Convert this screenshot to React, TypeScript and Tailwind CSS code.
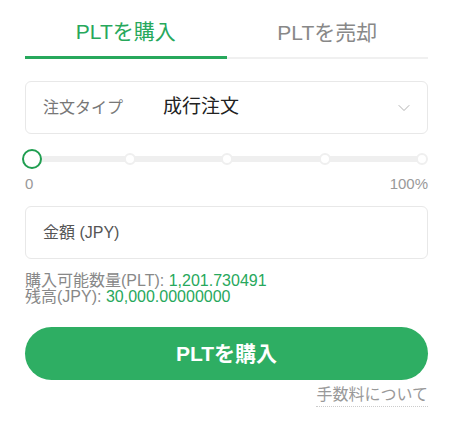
import { ChevronDown } from "lucide-react";

// ─── Tabs ────────────────────────────────────────────────────────────────────

const TABS = [
  { id: "buy", label: "PLTを購入", active: true },
  { id: "sell", label: "PLTを売却", active: false },
];

const STEPS = [0, 25, 50, 75, 100];

function Tabs() {
  return (
    <div className="grid grid-cols-2 items-end">
      {TABS.map((tab) => (
        <div key={tab.id} className="flex flex-col">
          <div
            className={`pt-[18px] pb-[10px] text-center text-[21px] leading-[28px] ${
              tab.active ? "text-[#27a85c]" : "text-[#888]"
            }`}
          >
            {tab.label}
          </div>
          {tab.active ? (
            <div className="h-[3px] bg-[#27a85c]" />
          ) : (
            <div className="h-[2px] bg-[#f0f0f0]" />
          )}
        </div>
      ))}
    </div>
  );
}

// ─── Percent slider ──────────────────────────────────────────────────────────

function PercentSlider() {
  return (
    <div className="mt-[14px]">
      <div className="relative h-[22px] ml-[7px] mr-[6px]">
        <div className="absolute left-0 right-0 top-[8px] h-[6px] bg-[#efefef] rounded-full" />
        {STEPS.slice(1).map((s) => (
          <span
            key={s}
            className="absolute top-[5px] w-[12px] h-[12px] -ml-[6px] rounded-full bg-white border-2 border-[#efefef]"
            style={{ left: `${s}%` }}
          />
        ))}
        <span className="absolute top-[1px] -left-[10px] w-[20px] h-[20px] rounded-full bg-white border-[2.5px] border-[#1f9e50]" />
      </div>
      <div className="flex justify-between mt-[5px] text-[15px] leading-[18px] text-[#999]">
        <span>0</span>
        <span>100%</span>
      </div>
    </div>
  );
}

// ─── Form ────────────────────────────────────────────────────────────────────

export default function App() {
  return (
    <div
      className="w-[450px] h-[428px] bg-white pl-[25px] pr-[22px]"
      style={{ fontFamily: '"Liberation Sans", "Noto Sans CJK JP", sans-serif' }}
    >
      <Tabs />

      {/* Order type */}
      <div className="mt-[22px] h-[53px] flex items-center border border-[#e8e8e8] rounded-[6px] pl-[17px] pr-[13px]">
        <span className="w-[120px] text-[16px] text-[#777]">注文タイプ</span>
        <span className="flex-1 text-[19px] text-[#222]">成行注文</span>
        <ChevronDown size={20} strokeWidth={1.1} className="text-[#aaa]" />
      </div>

      <PercentSlider />

      {/* Amount */}
      <div className="mt-[13px] h-[53px] flex items-center border border-[#e8e8e8] rounded-[6px] pl-[17px]">
        <span className="text-[16px] text-[#555]">金額 (JPY)</span>
      </div>

      {/* Balances */}
      <div className="mt-[14px] text-[16px] leading-[16px] text-[#888]">
        <div>
          購入可能数量(PLT): <span className="text-[#27a85c]">1,201.730491</span>
        </div>
        <div>
          残高(JPY): <span className="text-[#27a85c]">30,000.00000000</span>
        </div>
      </div>

      <button className="mt-[22px] w-full h-[53px] rounded-full bg-[#2eae63] text-white text-[21px] font-bold">
        PLTを購入
      </button>

      <div className="mt-[4px] flex justify-end">
        <span className="text-[16px] leading-[22px] text-[#999] border-b border-dotted border-[#ccc]">
          手数料について
        </span>
      </div>
    </div>
  );
}
